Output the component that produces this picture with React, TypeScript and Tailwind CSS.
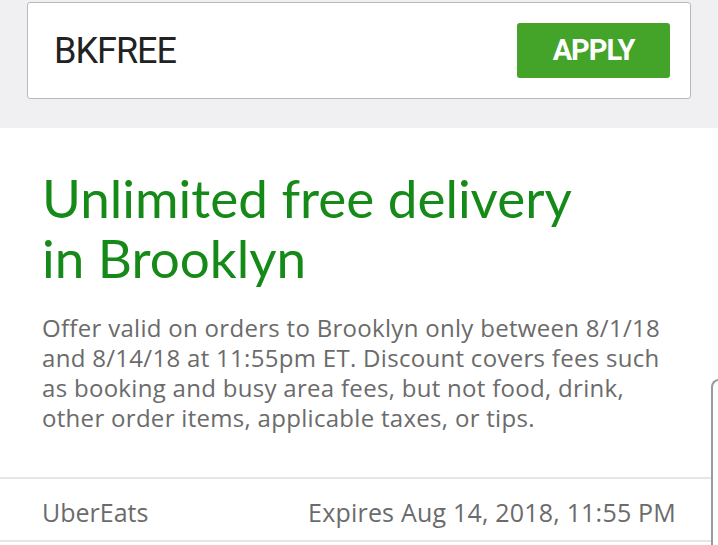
import React from 'react';

export default function App() {
  return (
    <div className="relative w-[718px] h-[545px] overflow-hidden bg-white flex flex-col font-['Open_Sans',sans-serif]">
      <div className="bg-[#f0f0f2] h-[128px] shrink-0 px-[27px] pt-[2px]">
        <div className="h-[97px] bg-white border border-[#b8b8b8] rounded-[3px] flex items-center justify-between pl-[26px] pr-[20px]">
          <span className="font-['Roboto',sans-serif] text-[36px] text-[#222] tracking-[-1px]">BKFREE</span>
          <button className="w-[153px] h-[55px] bg-[#44a329] rounded-[3px] text-white font-['Roboto',sans-serif] font-bold text-[29px] tracking-[-1px]">
            APPLY
          </button>
        </div>
      </div>

      <div className="h-[349px] shrink-0 px-[42px] pt-[40px] mr-[6px]">
        <h1 className="font-['Lato',sans-serif] text-[53px] leading-[60px] text-[#168a18]">
          Unlimited free delivery
          <br />
          in Brooklyn
        </h1>
        <p className="mt-[25px] text-[24px] leading-[30px] text-[#6b6b6b] tracking-[0.3px] whitespace-nowrap">
          Offer valid on orders to Brooklyn only between 8/1/18
          <br />
          and 8/14/18 at 11:55pm ET. Discount covers fees such
          <br />
          as booking and busy area fees, but not food, drink,
          <br />
          other order items, applicable taxes, or tips.
        </p>
      </div>

      <div className="h-[65px] shrink-0 mr-[6px] border-y-2 border-[#e6e6e6] flex items-center justify-between pt-[6px] pl-[42px] pr-[36px] text-[25px] text-[#6b6b6b]">
        <span>UberEats</span>
        <span className="tracking-[0.2px]">Expires Aug 14, 2018, 11:55 PM</span>
      </div>

      <div className="absolute left-[711px] top-[379px] w-[20px] h-[200px] border-l-2 border-t-2 border-[#9a9a9a] rounded-tl-[8px]" />
    </div>
  );
}
